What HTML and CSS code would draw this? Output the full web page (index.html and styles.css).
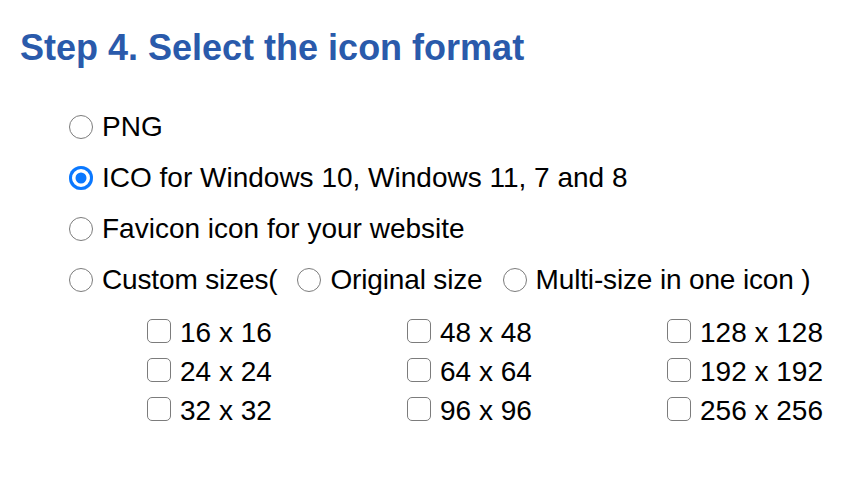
FILE: index.html
```html
<!DOCTYPE html>
<html>
<head>
<meta charset="utf-8">
<link rel="stylesheet" href="styles.css">
</head>
<body>
<h2 class="title">Step 4. Select the icon format</h2>
<div class="options">
  <label class="opt"><input type="radio" name="fmt" class="radio"><span>PNG</span></label>
  <label class="opt"><input type="radio" name="fmt" class="radio" checked><span>ICO for Windows 10, Windows 11, 7 and 8</span></label>
  <label class="opt"><input type="radio" name="fmt" class="radio"><span>Favicon icon for your website</span></label>
  <div class="opt custom">
    <label class="sub"><input type="radio" name="fmt" class="radio"><span>Custom sizes(</span></label>
    <label class="sub"><input type="radio" name="mode" class="radio"><span>Original size</span></label>
    <label class="sub"><input type="radio" name="mode" class="radio"><span>Multi-size in one icon )</span></label>
  </div>
  <div class="sizes">
    <label class="size"><input type="checkbox" class="check"><span>16 x 16</span></label>
    <label class="size"><input type="checkbox" class="check"><span>24 x 24</span></label>
    <label class="size"><input type="checkbox" class="check"><span>32 x 32</span></label>
    <label class="size"><input type="checkbox" class="check"><span>48 x 48</span></label>
    <label class="size"><input type="checkbox" class="check"><span>64 x 64</span></label>
    <label class="size"><input type="checkbox" class="check"><span>96 x 96</span></label>
    <label class="size"><input type="checkbox" class="check"><span>128 x 128</span></label>
    <label class="size"><input type="checkbox" class="check"><span>192 x 192</span></label>
    <label class="size"><input type="checkbox" class="check"><span>256 x 256</span></label>
  </div>
</div>
</body>
</html>
```
FILE: styles.css
```css
html, body {
  margin: 0;
  padding: 0;
  background: #fff;
}
body {
  font-family: "Liberation Sans", Arial, sans-serif;
  color: #000;
}
.title {
  margin: 30px 0 0 20px;
  font-size: 36px;
  line-height: 36px;
  font-weight: bold;
  color: #2a5aab;
}
.options {
  margin-top: 35px;
  padding-left: 69px;
}
.opt {
  display: flex;
  align-items: center;
  height: 51px;
  font-size: 28px;
  line-height: 51px;
}
.sub {
  display: flex;
  align-items: center;
}
.custom {
  gap: 20px;
  letter-spacing: -0.15px;
}
.radio {
  appearance: none;
  -webkit-appearance: none;
  box-sizing: border-box;
  width: 24px;
  height: 24px;
  margin: 0 9px 0 0;
  border: 1.6px solid #7c7c7c;
  border-radius: 50%;
  background: #fff;
  flex: none;
}
.radio:checked {
  border: none;
  background: #0a78ff;
  box-shadow: inset 0 0 0 3px #0a78ff, inset 0 0 0 6.5px #fff;
}
.sizes {
  display: grid;
  grid-template-columns: 260px 260px auto;
  grid-template-rows: repeat(3, 39px);
  grid-auto-flow: column;
  margin-top: 6px;
  padding-left: 78px;
}
.size {
  display: flex;
  align-items: center;
  font-size: 28px;
  line-height: 39px;
}
.size span {
  padding-top: 3px;
}
.check {
  appearance: none;
  -webkit-appearance: none;
  box-sizing: border-box;
  width: 24px;
  height: 24px;
  margin: 0 9px 0 0;
  border: 1.6px solid #7c7c7c;
  border-radius: 5px;
  background: #fff;
  flex: none;
}
```
